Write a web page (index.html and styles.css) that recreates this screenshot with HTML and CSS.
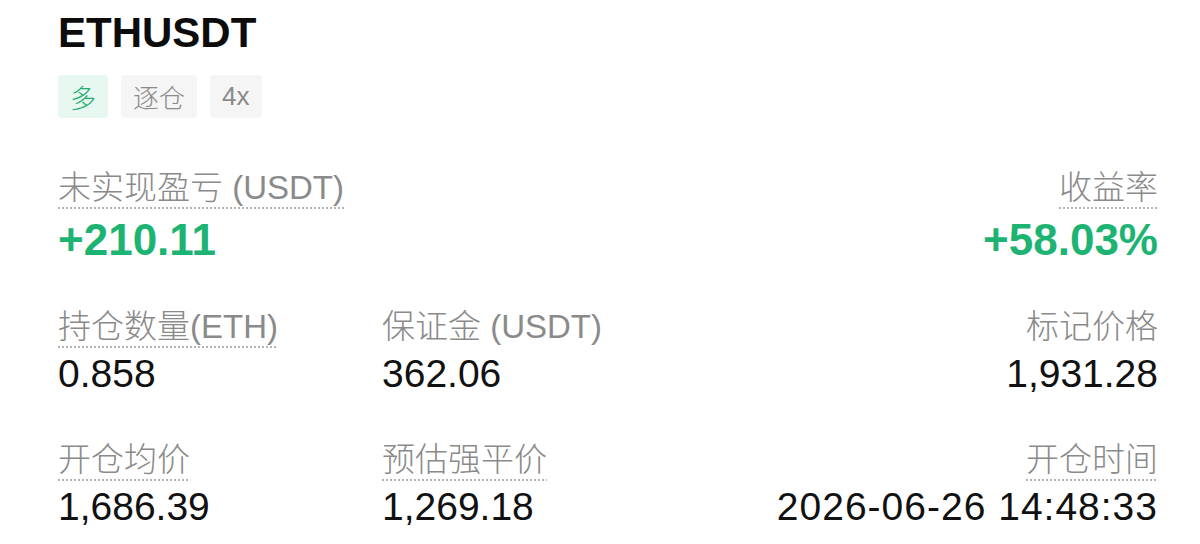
FILE: index.html
```html
<!DOCTYPE html>
<html lang="zh-CN">
<head>
<meta charset="utf-8">
<title>ETHUSDT 持仓</title>
<link rel="stylesheet" href="styles.css">
</head>
<body>
<main class="position">
  <h1 class="symbol">ETHUSDT</h1>
  <div class="tags">
    <span class="tag tag-long">多</span>
    <span class="tag">逐仓</span>
    <span class="tag">4x</span>
  </div>

  <section class="stats">
    <div class="cell">
      <span class="label">未实现盈亏 (USDT)</span>
      <span class="value value-pnl">+210.11</span>
    </div>
    <div class="cell"></div>
    <div class="cell cell-end">
      <span class="label">收益率</span>
      <span class="value value-pnl">+58.03%</span>
    </div>

    <div class="cell">
      <span class="label">持仓数量(ETH)</span>
      <span class="value">0.858</span>
    </div>
    <div class="cell">
      <span class="label plain">保证金 (USDT)</span>
      <span class="value">362.06</span>
    </div>
    <div class="cell cell-end">
      <span class="label plain">标记价格</span>
      <span class="value">1,931.28</span>
    </div>

    <div class="cell">
      <span class="label">开仓均价</span>
      <span class="value">1,686.39</span>
    </div>
    <div class="cell">
      <span class="label">预估强平价</span>
      <span class="value">1,269.18</span>
    </div>
    <div class="cell cell-end">
      <span class="label">开仓时间</span>
      <span class="value value-time">2026-06-26 14:48:33</span>
    </div>
  </section>
</main>
</body>
</html>
```

FILE: styles.css
```css
html, body {
  margin: 0;
  padding: 0;
  background: #ffffff;
}

body {
  font-family: "Liberation Sans", "Noto Sans CJK SC", sans-serif;
  color: #111111;
}

.position {
  padding: 8px 42px 0 58px;
}

.symbol {
  margin: 0;
  font-size: 42px;
  line-height: 50px;
  font-weight: 700;
  color: #0c0c0c;
}

.tags {
  display: flex;
  gap: 13px;
  margin-top: 17px;
}

.tag {
  display: inline-flex;
  align-items: center;
  height: 43px;
  padding: 0 12px;
  border-radius: 4px;
  background: #f5f5f5;
  color: #8a8a8a;
  font-size: 26px;
  font-weight: 300;
}

.tag-long {
  background: #e7f8f1;
  color: #1fae6f;
}

.stats {
  display: grid;
  grid-template-columns: 324px 1fr auto;
  row-gap: 43px;
  margin-top: 50px;
}

.cell {
  display: flex;
  flex-direction: column;
  align-items: flex-start;
}

.cell-end {
  align-items: flex-end;
}

.label {
  font-size: 33px;
  line-height: 40px;
  font-weight: 300;
  color: #8a8a8a;
  padding-bottom: 1px;
  background-image: linear-gradient(to right, #b4b4b4 50%, transparent 50%);
  background-size: 4px 2px;
  background-repeat: repeat-x;
  background-position: left bottom;
}

.label.plain {
  background-image: none;
}

.value {
  margin-top: 3px;
  font-size: 39px;
  line-height: 46px;
  color: #111111;
}

.value-pnl {
  margin-top: 7px;
  font-size: 44px;
  line-height: 48px;
  font-weight: 700;
  color: #1db473;
}

.value-time {
  letter-spacing: 1px;
}
```
